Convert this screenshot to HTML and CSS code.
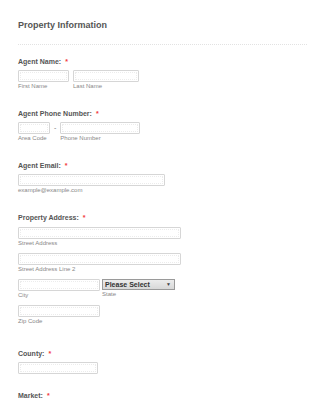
FILE: index.html
```html
<!DOCTYPE html>
<html lang="en">
<head>
  <meta charset="UTF-8">
  <title>Property Information</title>
  <link rel="stylesheet" href="styles.css">
</head>
<body>
  <form class="form">
    <div class="header">
      <h2 class="title">Property Information</h2>
    </div>

    <div class="field field-first">
      <label class="label">Agent Name:<span class="req">*</span></label>
      <div class="row">
        <div class="sub">
          <input type="text" class="input w-first">
          <div class="sublabel">First Name</div>
        </div>
        <div class="sub">
          <input type="text" class="input w-last">
          <div class="sublabel">Last Name</div>
        </div>
      </div>
    </div>

    <div class="field">
      <label class="label">Agent Phone Number:<span class="req">*</span></label>
      <div class="row">
        <div class="sub">
          <input type="text" class="input w-area">
          <div class="sublabel">Area Code</div>
        </div>
        <span class="dash">-</span>
        <div class="sub">
          <input type="text" class="input w-phone">
          <div class="sublabel">Phone Number</div>
        </div>
      </div>
    </div>

    <div class="field">
      <label class="label">Agent Email:<span class="req">*</span></label>
      <input type="text" class="input w-email">
      <div class="sublabel">example@example.com</div>
    </div>

    <div class="field field-address">
      <label class="label">Property Address:<span class="req">*</span></label>
      <div class="addr-line">
        <input type="text" class="input w-street">
        <div class="sublabel">Street Address</div>
      </div>
      <div class="addr-line">
        <input type="text" class="input w-street">
        <div class="sublabel">Street Address Line 2</div>
      </div>
      <div class="addr-line row">
        <div class="sub">
          <input type="text" class="input w-city">
          <div class="sublabel">City</div>
        </div>
        <div class="sub">
          <div class="select-box">
            <select class="select">
              <option>Please Select</option>
            </select>
            <span class="arrow">&#9660;</span>
          </div>
          <div class="sublabel">State</div>
        </div>
      </div>
      <div class="addr-line">
        <input type="text" class="input w-city">
        <div class="sublabel">Zip Code</div>
      </div>
    </div>

    <div class="field field-county">
      <label class="label">County:<span class="req">*</span></label>
      <input type="text" class="input w-county">
    </div>

    <div class="field field-market">
      <label class="label">Market:<span class="req">*</span></label>
    </div>
  </form>
</body>
</html>
```

FILE: styles.css
```css
body {
  margin: 0;
  background-color: #fff;
  font-family: "Liberation Sans", Arial, sans-serif;
  color: #555;
}
.form {
  padding: 0 18px;
}
.header {
  padding: 20px 0 13px;
  border-bottom: 1px dotted #e2e2e2;
}
.title {
  margin: 0;
  font-size: 9px;
  line-height: 11px;
  font-weight: bold;
  color: #555;
}
.field {
  margin-top: 19px;
}
.field-first {
  margin-top: 12px;
}
.field-county {
  margin-top: 24px;
}
.field-market {
  margin-top: 17px;
}
.label {
  display: block;
  font-size: 7px;
  line-height: 9px;
  font-weight: bold;
  color: #555;
  margin-bottom: 4px;
}
.field-address .label {
  margin-bottom: 5px;
}
.req {
  color: #f23a3c;
  margin-left: 4px;
}
.row {
  display: flex;
  align-items: flex-start;
}
.sub {
  margin-right: 4px;
}
.dash {
  font-size: 7px;
  line-height: 12px;
  color: #777;
  margin: 0 4px 0 0;
}
.input {
  display: block;
  box-sizing: border-box;
  height: 12px;
  margin: 0;
  padding: 0;
  border: 1px solid #d6d6d6;
  border-radius: 1px;
  background-color: #fff;
  outline: 1px dotted #ececec;
  outline-offset: -3px;
}
.w-first { width: 51px; }
.w-last { width: 66px; }
.w-area { width: 32px; }
.w-phone { width: 80px; }
.w-email { width: 147px; }
.w-street { width: 163px; }
.w-city { width: 82px; }
.w-county { width: 80px; }
.sublabel {
  font-size: 6px;
  line-height: 8px;
  color: #888;
  white-space: nowrap;
}
.addr-line {
  margin-bottom: 6px;
}
.addr-line .sub {
  margin-right: 2px;
}
.select-box {
  position: relative;
  width: 73px;
  height: 11px;
}
.select {
  display: block;
  -webkit-appearance: none;
  appearance: none;
  box-sizing: border-box;
  width: 73px;
  height: 11px;
  margin: 0;
  padding: 0 0 0 2px;
  border: 1px solid #9a9a9a;
  border-radius: 0;
  background: linear-gradient(#ececec, #d8d8d8);
  font-family: "Liberation Sans", Arial, sans-serif;
  font-size: 7px;
  line-height: 9px;
  font-weight: bold;
  color: #333;
}
.arrow {
  position: absolute;
  right: 4px;
  top: 2px;
  font-size: 5px;
  line-height: 7px;
  color: #444;
  pointer-events: none;
}
```
